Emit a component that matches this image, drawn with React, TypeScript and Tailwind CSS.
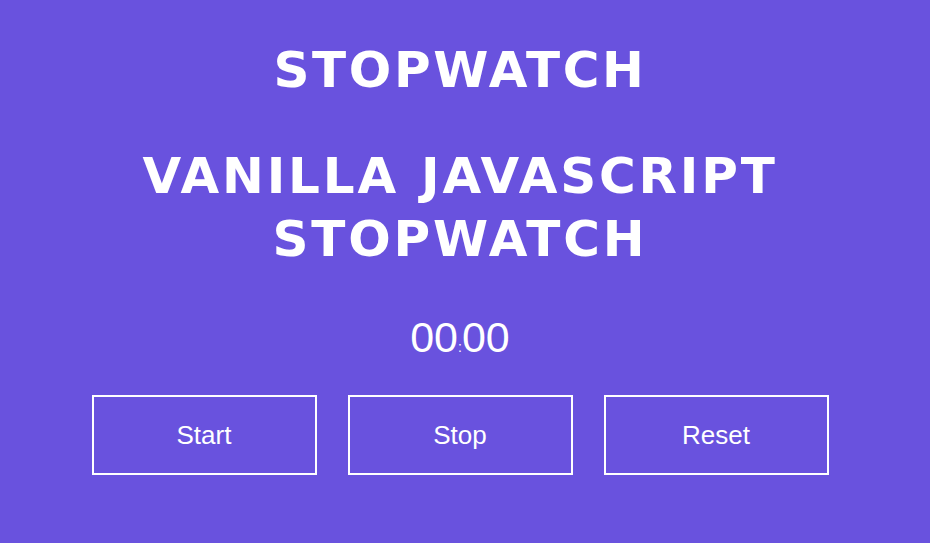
import React, {useEffect, useRef, useState} from 'react';

const pad = (n: number) => String(n).padStart(2, '0');

export default function App() {
  const [seconds, setSeconds] = useState(0);
  const [tens, setTens] = useState(0);
  const timer = useRef<number | null>(null);

  const stop = () => {
    if (timer.current) {
      window.clearInterval(timer.current);
      timer.current = null;
    }
  };

  const start = () => {
    stop();
    timer.current = window.setInterval(() => {
      setTens((t) => {
        if (t >= 99) {
          setSeconds((s) => s + 1);
          return 0;
        }
        return t + 1;
      });
    }, 10);
  };

  const reset = () => {
    stop();
    setSeconds(0);
    setTens(0);
  };

  useEffect(() => stop, []);

  return (
    <div className="min-h-[543px] w-full bg-[#6952de] text-white flex flex-col items-center pt-[39px] pr-[10px]">
      <h1 className="font-['DejaVu_Sans',Verdana,sans-serif] font-bold text-[50px] leading-[63px] tracking-[2.6px] text-center">
        STOPWATCH
      </h1>
      <h2 className="mt-[43px] font-['DejaVu_Sans',Verdana,sans-serif] font-bold text-[50px] leading-[63px] tracking-[2.8px] [word-spacing:2px] text-center">
        VANILLA JAVASCRIPT
        <br />
        STOPWATCH
      </h2>
      <p className="mt-[42px] font-['Liberation_Sans',Arial,sans-serif] text-[43px] leading-[48px]">
        {pad(seconds)}
        <span className="text-[14px]">:</span>
        {pad(tens)}
      </p>
      <div className="mt-[24px] flex gap-[31px] font-['Liberation_Sans',Arial,sans-serif]">
        <button
          onClick={start}
          className="w-[225px] h-[80px] border-2 border-white text-[26px] cursor-pointer"
        >
          Start
        </button>
        <button
          onClick={stop}
          className="w-[225px] h-[80px] border-2 border-white text-[26px] cursor-pointer"
        >
          Stop
        </button>
        <button
          onClick={reset}
          className="w-[225px] h-[80px] border-2 border-white text-[26px] cursor-pointer"
        >
          Reset
        </button>
      </div>
    </div>
  );
}
